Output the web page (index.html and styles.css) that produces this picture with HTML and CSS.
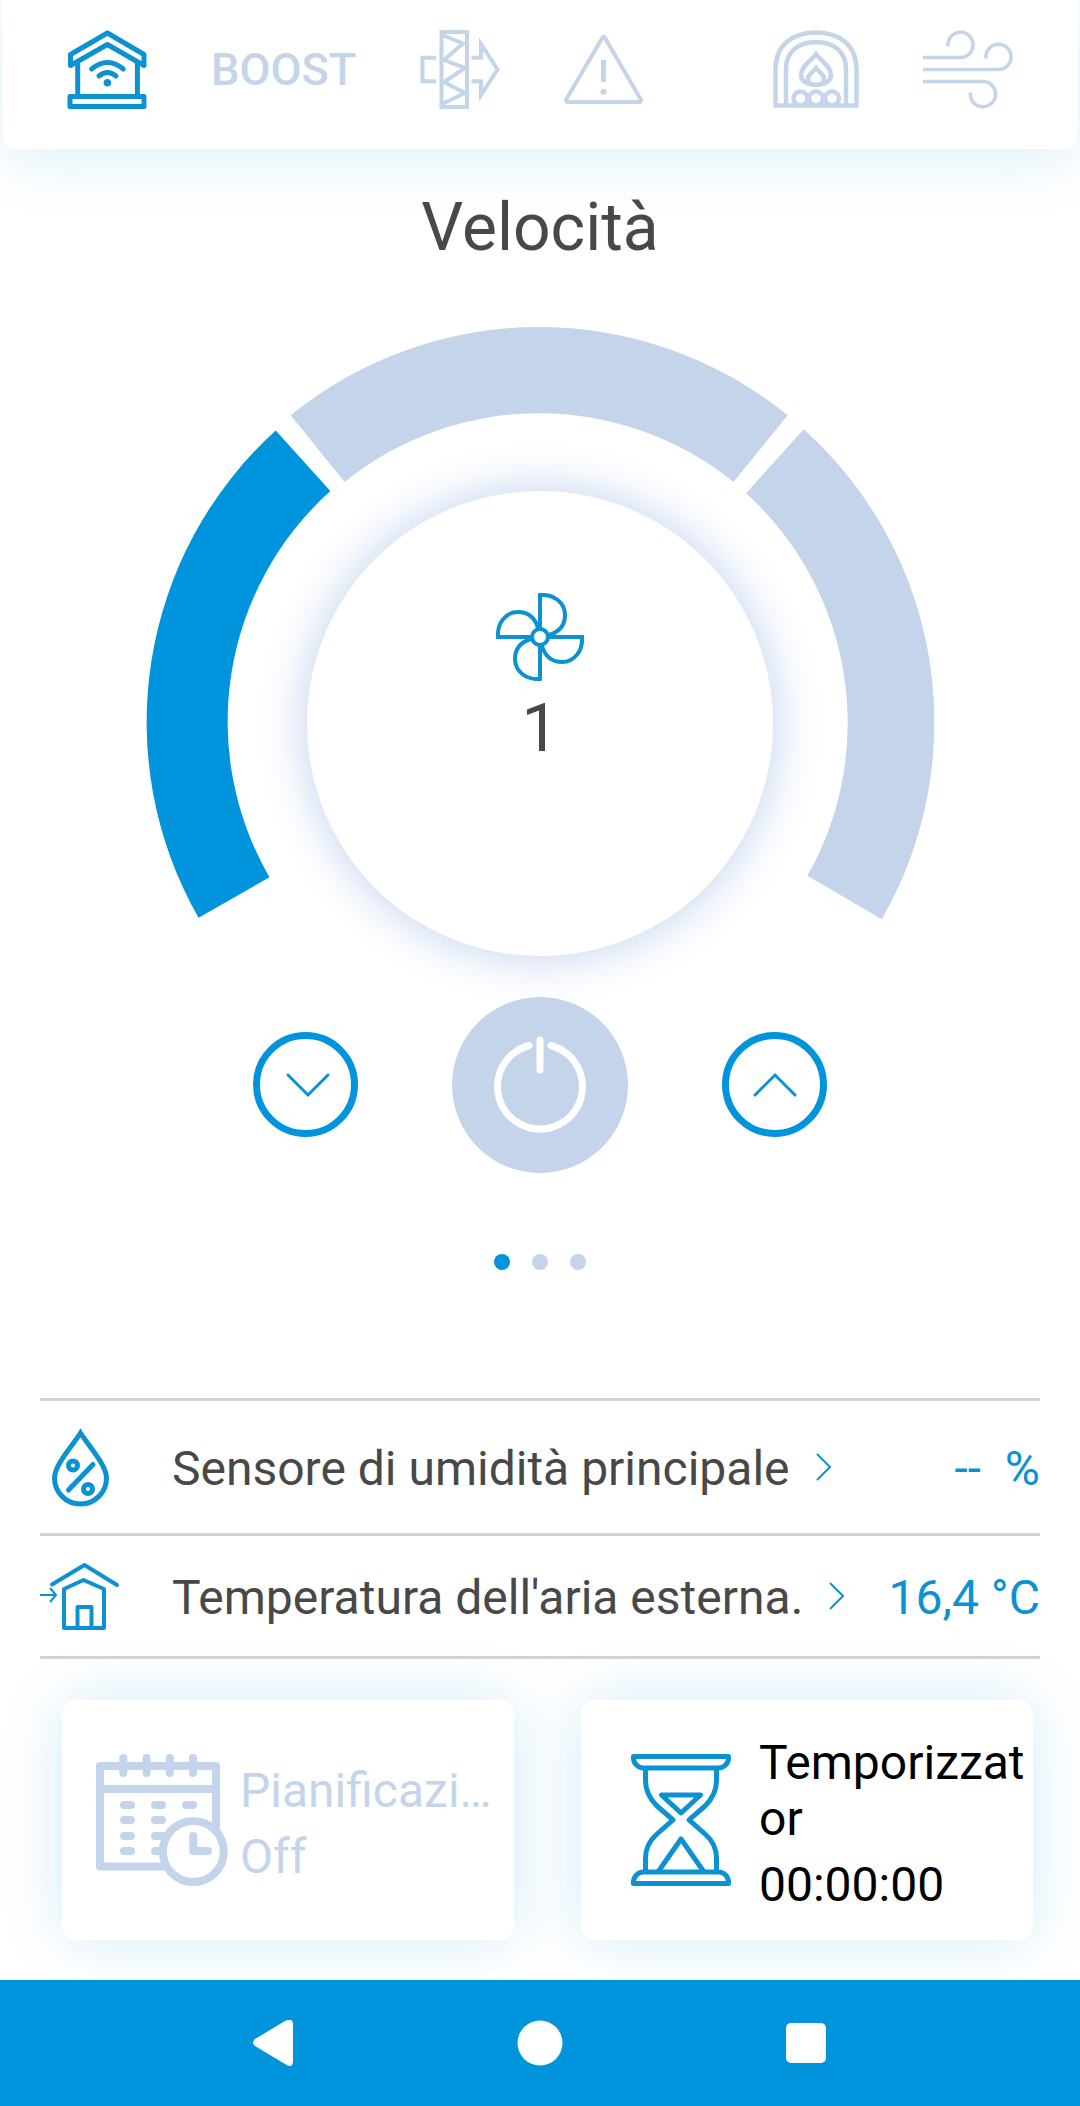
FILE: index.html
```html
<!DOCTYPE html>
<html lang="it">

<head>
	<meta charset="utf-8">
	<meta name="viewport" content="width=device-width, initial-scale=1">
	<title>Velocità</title>
	<link rel="stylesheet" href="styles.css">
</head>

<body>
	<header class="topbar">
		<div class="modes">
			<button class="mode active" aria-label="Casa">
				<svg width="80" height="80" viewBox="0 0 80 80" stroke-width="5" stroke-linejoin="round">
					<path d="M40.400 3L77 24.500V35.500L40.400 14.500L3.500 35.500V24.500Z" />
					<path d="M10.700 33V66M70.400 33V66M3 66.500H77V76.500H3Z" />
					<path d="M24.600 39Q40.400 26 56.300 39M32 46Q40.400 39 49 46" stroke-linecap="round" />
					<circle cx="40.400" cy="52.700" r="3.800" fill="currentColor" stroke="none" />
				</svg>
			</button>
			<button class="mode boost">BOOST</button>
			<button class="mode" aria-label="Filtro">
				<svg width="80" height="80" viewBox="0 0 80 80" stroke-width="4">
					<path d="M21.500 2H47V77H21.500Z" />
					<path d="M22 5L43 13.500L24 30L45 38L24 52L45 63L22 74" />
					<path d="M16 27.700H2.500V51.300H16M51.500 27.700H61V14L77.500 39.500L61 65V51.300H51.500" />
				</svg>
			</button>
			<button class="mode" aria-label="Allarmi">
				<svg width="80" height="80" viewBox="0 0 80 80" stroke-width="4">
					<path d="M38.200 8Q39.500 5.500 41 8L76.500 69Q78 72 75 72H4Q1 72 2.500 69Z" />
					<path d="M39.500 30V52" stroke-width="5" />
					<circle cx="39.500" cy="61.700" r="3" fill="currentColor" stroke="none" />
				</svg>
			</button>
		</div>
		<div class="modes">
			<button class="mode" aria-label="Camino">
				<svg width="86" height="80" viewBox="0 0 86 80" stroke-width="4.500">
					<path d="M2.500 75.500V39C2.500 15 20 2.500 43 2.500S83.500 15 83.500 39V75.500Z" />
					<path d="M13 75V39C13 22 25 12 43 12S73 22 73 39V75" />
					<path d="M43 24C38 31 28 36 28 45C28 51 34 55 43 55S58 51 58 45C58 36 48 31 43 24Z" />
					<path d="M43 38C40 42 35 44 35 49C35 53 38 55 43 55S51 53 51 49C51 44 46 42 43 38Z" />
					<circle cx="27.500" cy="68.500" r="7" />
					<circle cx="43" cy="68.500" r="7" />
					<circle cx="59" cy="68.500" r="7" />
				</svg>
			</button>
			<button class="mode" aria-label="Ventilazione">
				<svg width="90" height="80" viewBox="0 0 90 80" stroke-width="3.500">
					<path d="M0 27.500H37.500A12.600 12.600 0 1 0 24.900 15V16.500" />
					<path d="M0 39.500H75.500A12.600 12.600 0 1 0 62.900 27V28.500" />
					<path d="M0 51.500H60A12.600 12.600 0 1 1 47.400 64V62.500" />
				</svg>
			</button>
		</div>
	</header>

	<main>
		<h1 class="title">Velocità</h1>

		<div class="gauge">
			<svg class="segments" viewBox="0 0 790 630">
				<path class="on" d="M52.700 592A395 395 0 0 1 130 103.600L184.700 164.400A311 311 0 0 0 123.700 551.400Z" />
				<path d="M145 88.500A394.500 394.500 0 0 1 643 88.500L588.700 155.400A309.500 309.500 0 0 0 199 155.400Z" />
				<path d="M659 102.400A395 395 0 0 1 737.300 593.400L662.700 550A311 311 0 0 0 601.300 166.500Z" />
			</svg>
			<div class="dial">
				<svg class="fan" width="88" height="88" viewBox="0 0 88 88">
					<circle cx="44" cy="44" r="8" />
					<path d="M44 36V2C57 1 69 9 69 22C69 32 63 39 53 42" />
					<path d="M44 36V2C57 1 69 9 69 22C69 32 63 39 53 42" transform="rotate(90 44 44)" />
					<path d="M44 36V2C57 1 69 9 69 22C69 32 63 39 53 42" transform="rotate(180 44 44)" />
					<path d="M44 36V2C57 1 69 9 69 22C69 32 63 39 53 42" transform="rotate(270 44 44)" />
				</svg>
				<span class="speed">1</span>
			</div>
		</div>

		<div class="controls">
			<button class="round" aria-label="Diminuisci">
				<svg width="44" height="24" viewBox="0 0 44 24"><path d="M4 2L24 22L44 2" /></svg>
			</button>
			<button class="power" aria-label="Accendi o spegni">
				<svg width="96" height="104" viewBox="0 0 96 104">
					<path d="M37 12.500A42.500 42.500 0 1 0 59 12.500M48 7V37" />
				</svg>
			</button>
			<button class="round" aria-label="Aumenta">
				<svg width="44" height="24" viewBox="0 0 44 24"><path d="M2 22L22 2L42 22" /></svg>
			</button>
		</div>

		<div class="dots">
			<span class="dot current"></span>
			<span class="dot"></span>
			<span class="dot"></span>
		</div>

		<div class="sensors">
			<a class="sensor tall" href="#">
				<svg class="icon" width="80" height="80" viewBox="0 0 80 80" stroke-width="5">
					<path d="M40.500 6C33 18 14.500 38 14.500 51A26 26 0 0 0 66.500 51C66.500 38 48 18 40.500 6Z" />
					<circle cx="33" cy="38.500" r="4.500" />
					<circle cx="48" cy="62" r="4.500" />
					<path d="M28.500 63L53 37.500" stroke-linecap="round" />
				</svg>
				<span class="name">Sensore di umidità principale</span>
				<svg class="more" width="16" height="30" viewBox="0 0 16 30"><path d="M1 2L14 15L1 28" /></svg>
				<span class="value">--  %</span>
			</a>
			<a class="sensor" href="#">
				<svg class="icon" width="80" height="80" viewBox="0 0 80 80" stroke-width="4" stroke-linejoin="round">
					<path d="M12 28.500L44.500 9L77 29" stroke-linecap="round" />
					<path d="M24 33L43.500 24L64 33V72H24Z" />
					<path d="M37.500 72V51H51.500V72" />
					<path d="M0 39H15M10 32L16 39L10 46" stroke-width="2" />
				</svg>
				<span class="name">Temperatura dell'aria esterna.</span>
				<svg class="more" width="16" height="30" viewBox="0 0 16 30"><path d="M1 2L14 15L1 28" /></svg>
				<span class="value">16,4 °C</span>
			</a>
		</div>

		<div class="cards">
			<button class="card off">
				<svg class="card-icon" width="132" height="132" viewBox="0 0 132 132" stroke-width="8" stroke-linecap="round" stroke-linejoin="round">
					<path d="M120 80V12H4V112.500H80M4 35H120" />
					<path d="M27.300 4V19M50.600 4V19M73.800 4V19M97 4V19" />
					<path d="M28 51H35M59 51H66M90 51H97M28 66H35M59 66H66M28 82H35M59 82H66M28 97H35M59 97H66" />
					<circle cx="97.300" cy="97.500" r="30.500" fill="#fff" />
					<path d="M97.300 82V97H112" />
				</svg>
				<span class="card-text">
					<span class="line cut">Pianificazione</span>
					<span class="line">Off</span>
				</span>
			</button>
			<button class="card">
				<svg class="card-icon" width="132" height="132" viewBox="-16 0 132 132" stroke-width="5" stroke-linejoin="round">
					<path d="M2.500 2.500H97.500V4A10 10 0 0 1 87.500 14H12.500A10 10 0 0 1 2.500 4Z" />
					<path d="M14.500 14V27C14.500 38 19 45 26 52L42 65.800L26 80C18 87 14.500 95 14.500 104V118" />
					<path d="M85.500 14V27C85.500 38 81 45 74 52L58 65.800L74 80C82 87 85.500 95 85.500 104V118" />
					<path d="M30.500 41H69.500L50 59Z" />
					<path d="M27 118L50 85L73 118" />
					<path d="M2.500 129.500H97.500V128A10 10 0 0 0 87.500 118H12.500A10 10 0 0 0 2.500 128Z" />
				</svg>
				<span class="card-text">
					<span class="line">Temporizzator</span>
					<span class="line">00:00:00</span>
				</span>
			</button>
		</div>
	</main>

	<nav class="navbar">
		<button aria-label="Indietro">
			<svg width="46" height="46" viewBox="0 0 46 46"><path d="M34 1Q42 -3 42 5V41Q42 49 34 44L4 26Q0 23 4 19Z" /></svg>
		</button>
		<button aria-label="Home">
			<svg width="46" height="46" viewBox="0 0 46 46"><circle cx="23" cy="23" r="22.500" /></svg>
		</button>
		<button aria-label="Recenti">
			<svg width="46" height="46" viewBox="0 0 46 46"><rect x="3" y="3" width="40" height="40" rx="5" /></svg>
		</button>
	</nav>
</body>

</html>
```

FILE: styles.css
```css
* {
	box-sizing: border-box;
}

body {
	margin: 0;
	min-height: 100vh;
	display: flex;
	flex-direction: column;
	background-color: #fff;
	color: #484848;
	font-family: Roboto, "Liberation Sans", sans-serif;
	font-size: 48px;
	line-height: 56px;
}

button {
	padding: 0;
	border: none;
	background: none;
	color: inherit;
	font: inherit;
	cursor: pointer;
}

svg {
	display: block;
	flex: none;
	fill: none;
	stroke: currentColor;
}

main {
	flex: 1;
}

/* top bar */

.topbar {
	display: flex;
	justify-content: space-between;
	margin: 0 2px;
	padding: 30px 65px 39px;
	border-radius: 0 0 14px 14px;
	background-color: #fff;
	box-shadow: 0 10px 60px rgba(0, 148, 220, 0.14);
}

.modes {
	display: flex;
	align-items: center;
	gap: 64px;
}

.mode {
	color: #c4d5ea;
}

.mode.active {
	color: #0c92d2;
}

.boost {
	font-size: 45px;
	font-weight: 500;
}

/* speed gauge */

.title {
	margin: 40px 0 60px;
	font-size: 66px;
	font-weight: 400;
	line-height: 78px;
	text-align: center;
}

.gauge {
	display: grid;
	width: 73%;
	margin: 0 auto;
}

.segments {
	grid-area: 1 / 1;
	width: 100%;
	fill: #c4d5eb;
	stroke: none;
}

.segments .on {
	fill: #0094dc;
}

.dial {
	grid-area: 1 / 1;
	align-self: end;
	justify-self: center;
	width: 59%;
	aspect-ratio: 1;
	display: flex;
	flex-direction: column;
	align-items: center;
	gap: 9px;
	padding-top: 102px;
	border-radius: 50%;
	background-color: #fff;
	box-shadow: 0 0 50px #bfd1ee;
}

.fan {
	color: #0c92d2;
	stroke-width: 4;
}

.speed {
	font-size: 66px;
	line-height: 78px;
}

.controls {
	display: flex;
	justify-content: center;
	align-items: center;
	gap: 94px;
	margin-top: 41px;
}

.controls button {
	display: flex;
	justify-content: center;
	align-items: center;
	border-radius: 50%;
}

.round {
	width: 105px;
	height: 105px;
	border: 7px solid #0094dc;
	color: #0c92d2;
	stroke-width: 3;
	stroke-linecap: round;
}

.round svg {
	overflow: visible;
}

.power {
	width: 176px;
	height: 176px;
	background-color: #c4d5eb;
	color: #fff;
	stroke-width: 7;
	stroke-linecap: round;
}

.dots {
	display: flex;
	justify-content: center;
	gap: 22px;
	margin-top: 81px;
}

.dot {
	width: 16px;
	height: 16px;
	border-radius: 50%;
	background-color: #c4d5eb;
}

.dot.current {
	background-color: #0094dc;
}

/* sensor rows */

.sensors {
	margin: 128px 40px 0;
	border-top: 3px solid #d3d3d3;
}

.sensor {
	display: flex;
	align-items: center;
	height: 123px;
	border-bottom: 3px solid #d3d3d3;
	color: #0c92d2;
	text-decoration: none;
}

.sensor.tall {
	height: 135px;
}

.icon {
	margin-right: 52px;
}

.name,
.value {
	padding-top: 5px;
}

.name {
	color: #484848;
}

.more {
	margin-left: 26px;
	stroke-width: 2;
}

.value {
	margin-left: auto;
	white-space: pre;
}

/* schedule and timer */

.cards {
	display: grid;
	grid-template-columns: repeat(2, minmax(0, 1fr));
	gap: 67px;
	margin: 41px 47px 40px 62px;
}

.card {
	display: flex;
	align-items: center;
	gap: 12px;
	height: 240px;
	padding-left: 34px;
	border-radius: 14px;
	background-color: #fff;
	box-shadow: 0 0 60px rgba(0, 148, 220, 0.18);
	color: #000;
	text-align: left;
}

.card.off,
.card.off .card-icon {
	color: #c4d5eb;
}

.card-icon {
	color: #0c92d2;
}

.card-text {
	flex: 1;
	min-width: 0;
	display: flex;
	flex-direction: column;
	gap: 10px;
	padding-top: 8px;
}

.line {
	word-break: break-all;
}

.line.cut {
	overflow: hidden;
	white-space: nowrap;
	text-overflow: ellipsis;
}

/* system navigation */

.navbar {
	display: flex;
	padding: 0 13%;
	background-color: #0094dc;
}

.navbar button {
	flex: 1;
	height: 126px;
	display: flex;
	justify-content: center;
	align-items: center;
}

.navbar svg {
	fill: #fff;
	stroke: none;
}
```
